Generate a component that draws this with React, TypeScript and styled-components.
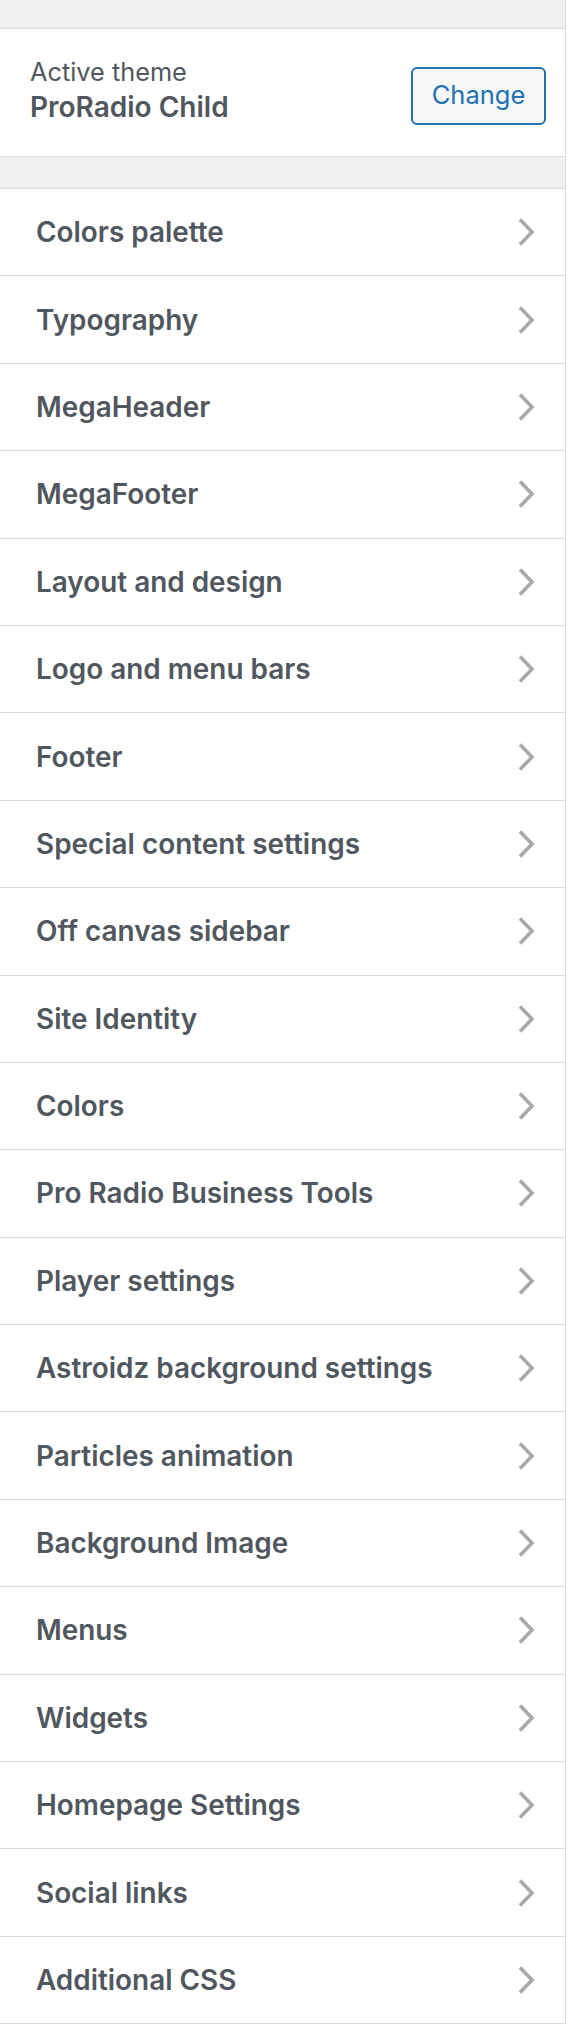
import React from 'react';
import styled, {createGlobalStyle} from 'styled-components';

const GlobalStyle = createGlobalStyle`
	html,body{
		margin:0;
		padding:0;
		background:#fff;
	}
	body{
		font-family:Inter,"Noto Sans",sans-serif;
		-webkit-font-smoothing:antialiased;
	}
`;

const Sidebar = styled.div`
	width:565px;
	border-right:1px solid #dcdcde;
	background:#f0f0f1;
	color:#50575e;
`;

const Gap = styled.div<{h:number}>`
	height:${p=>p.h}px;
	border-bottom:1px solid #dcdcde;
	background:#f0f0f1;
`;

const ThemeInfo = styled.div`
	height:128px;
	box-sizing:border-box;
	padding:0 19px 0 30px;
	display:flex;
	justify-content:space-between;
	align-items:center;
	background:#fff;
	border-bottom:1px solid #dcdcde;
`;

const Label = styled.div`
	font-size:25.3px;
	line-height:30px;
	font-weight:400;
	margin-top:-2px;
`;

const ThemeName = styled.div`
	font-size:28px;
	line-height:40px;
	font-weight:600;
`;

const Button = styled.button`
	width:135px;
	height:58px;
	margin-top:6px;
	border:2px solid #2271b1;
	border-radius:6px;
	background:#f6f7f7;
	color:#2271b1;
	font-family:Inter,"Noto Sans",sans-serif;
	font-size:25.5px;
	padding:0 0 2px;
`;

const SectionList = styled.ul`
	list-style:none;
	margin:0;
	padding:0;
`;

const Section = styled.li`
	height:86.4px;
	box-sizing:content-box;
	display:flex;
	align-items:center;
	justify-content:space-between;
	padding:0 30px 0 36px;
	background:#fff;
	border-bottom:1px solid #dcdcde;
	font-size:27.9px;
	font-weight:600;
	color:#50575e;
`;

const Chevron = () => (
	<svg width="18" height="28" viewBox="0 0 18 28">
		<polyline points="3,1.5 15,14 3,26.5" fill="none" stroke="#a7aaad" strokeWidth="3.6"/>
	</svg>
);

const sections = [
	'Colors palette',
	'Typography',
	'MegaHeader',
	'MegaFooter',
	'Layout and design',
	'Logo and menu bars',
	'Footer',
	'Special content settings',
	'Off canvas sidebar',
	'Site Identity',
	'Colors',
	'Pro Radio Business Tools',
	'Player settings',
	'Astroidz background settings',
	'Particles animation',
	'Background Image',
	'Menus',
	'Widgets',
	'Homepage Settings',
	'Social links',
	'Additional CSS',
];

function App() {
	return (
		<>
			<GlobalStyle/>
			<Sidebar>
				<Gap h={28}/>
				<ThemeInfo>
					<div>
						<Label>Active theme</Label>
						<ThemeName>ProRadio Child</ThemeName>
					</div>
					<Button>Change</Button>
				</ThemeInfo>
				<Gap h={31}/>
				<SectionList>
					{sections.map(s=>
						<Section key={s}>
							<span>{s}</span>
							<Chevron/>
						</Section>
					)}
				</SectionList>
			</Sidebar>
		</>
	);
}

export default App;
